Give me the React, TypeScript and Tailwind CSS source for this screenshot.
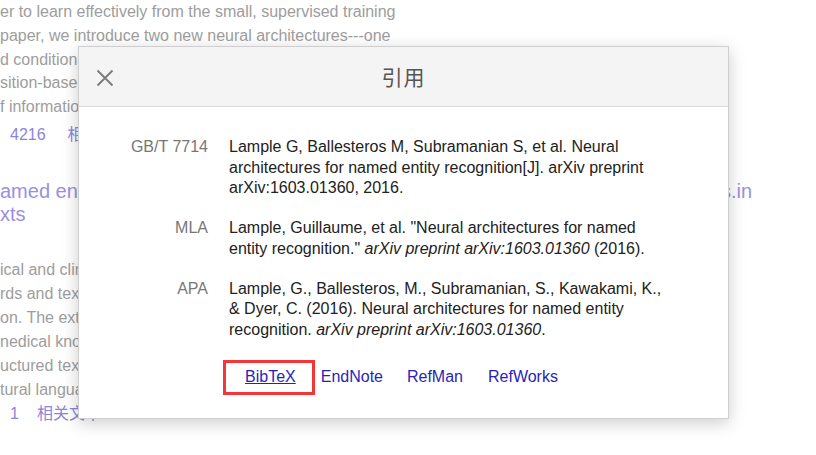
import React from 'react';

const bgLines = [
    'er to learn effectively from the small, supervised training',
    'paper, we introduce two new neural architectures---one',
    'd conditional random fields, and the other that constructs',
    'sition-based approach inspired by shift-reduce parsers.',
    'f information about words: character-based word',
];

const bgLines2 = [
    'ical and clinical named entity recognition systems',
    'rds and texts are usually written in free form',
    'on. The extraction of such information is important',
    'nedical knowledge discovery from electronic health',
    'uctured texts. In this paper we explore the use of',
    'tural language processing for this kind of task',
];

const citations = [
    {
        label: 'GB/T 7714',
        text: <>Lample G, Ballesteros M, Subramanian S, et al. Neural architectures for named entity recognition[J]. arXiv preprint arXiv:1603.01360, 2016.</>,
    },
    {
        label: 'MLA',
        text: <>Lample, Guillaume, et al. "Neural architectures for named entity recognition." <i>arXiv preprint arXiv:1603.01360</i> (2016).</>,
    },
    {
        label: 'APA',
        text: <>Lample, G., Ballesteros, M., Subramanian, S., Kawakami, K., &amp; Dyer, C. (2016). Neural architectures for named entity recognition. <i>arXiv preprint arXiv:1603.01360</i>.</>,
    },
];

const App: React.FC = () => {
    return (
        <div className="relative w-[816px] h-[455px] overflow-hidden bg-white font-['Liberation_Sans','Noto_Sans_CJK_SC',sans-serif]">
            {/* faded results page underneath */}
            <div className="whitespace-nowrap text-[16px] leading-[23.75px] text-[#9d9d9d]">
                {bgLines.map((l) => (
                    <div key={l}>{l}</div>
                ))}
                <div className="flex text-[#8c84dc] mt-[4px] pl-[10px] gap-[22px]">
                    <span>4216</span>
                    <span>相关文章</span>
                </div>
                <div className="mt-[33px] w-[752px] flex justify-between text-[20px] leading-[23px] text-[#9a90e2]">
                    <span>amed entity recognition in clinical and biomedical</span>
                    <span>s.in</span>
                </div>
                <div className="text-[20px] leading-[23px] text-[#9a90e2]">xts</div>
                <div className="mt-[32px] leading-[24px]">
                    {bgLines2.map((l) => (
                        <div key={l}>{l}</div>
                    ))}
                    <div className="flex text-[#8c84dc] pl-[10px] gap-[18px]">
                        <span>1</span>
                        <span>相关文章</span>
                    </div>
                </div>
            </div>

            {/* citation dialog */}
            <div className="absolute left-[78px] top-[46px] w-[651px] h-[373px] bg-white border border-[#cfcfcf] shadow-[0_4px_16px_rgba(0,0,0,0.2)]">
                <div className="relative h-[60px] bg-[#f4f4f4] border-b border-[#dadada] flex items-center justify-center">
                    <button className="absolute left-[17px] top-[22px] w-[18px] h-[18px]">
                        <svg viewBox="0 0 18 18" className="w-[18px] h-[18px]" stroke="#7a7a7a" strokeWidth={1.8} fill="none">
                            <path d="M1.5 1.5l15 15M16.5 1.5l-15 15" />
                        </svg>
                    </button>
                    <h2 className="text-[21px] text-[#555] font-['Noto_Sans_CJK_SC',sans-serif] tracking-[1px]">引用</h2>
                </div>
                <div className="pt-[30px] text-[16px] leading-[20.5px]">
                    {citations.map((c) => (
                        <div key={c.label} className="flex mb-[19.5px]">
                            <div className="w-[129px] text-right text-[#777]">{c.label}</div>
                            <div className="ml-[21px] w-[440px] text-[#222]">{c.text}</div>
                        </div>
                    ))}
                    <div className="flex items-center ml-[144px] mt-[19px] text-[#2a1fb4]">
                        <span className="border-[3px] border-[#f53636] pl-[19px] pr-[16px] h-[35px] flex items-center">
                            <a className="underline">BibTeX</a>
                        </span>
                        <a className="ml-[6px]">EndNote</a>
                        <a className="ml-[24px]">RefMan</a>
                        <a className="ml-[25px]">RefWorks</a>
                    </div>
                </div>
            </div>
        </div>
    );
};

export default App;
